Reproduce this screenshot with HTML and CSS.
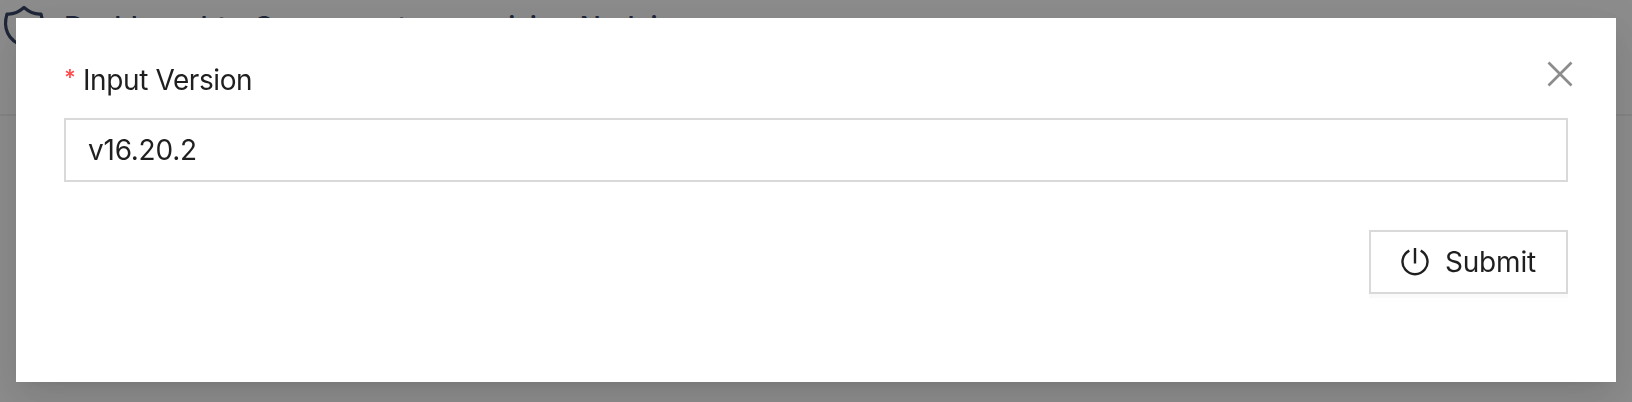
FILE: index.html
```
<!DOCTYPE html>
<html lang="en">
<head>
<meta charset="utf-8">
<title>Input Version</title>
<link rel="stylesheet" href="styles.css">
</head>
<body>
<header class="page-header">
  <svg class="shield" viewBox="0 0 40 42" fill="none" stroke="#364566" stroke-width="3.2" stroke-linejoin="round"><path d="M20 2.500C16 6 9 9.500 3 9C-1 22 3 36 20 41C37 36 41 22 37 9C31 9.500 24 6 20 2.500Z"/></svg>
  <h1 class="page-title">Dashboard to Component supervision Nodejs</h1>
</header>
<div class="mask">
  <section class="modal" role="dialog">
    <button class="close" aria-label="Close"><svg viewBox="0 0 26 26" stroke="currentColor" stroke-width="2.7" fill="none"><path d="M1.500 1.500 24.500 24.500M24.500 1.500 1.500 24.500"/></svg></button>
    <form class="form">
      <label class="label" for="version"><span class="required">*</span>Input Version</label>
      <input class="input" id="version" value="v16.20.2">
      <button class="submit" type="button"><svg viewBox="0 0 28 28" stroke="currentColor" stroke-width="2.400" fill="none"><path d="M14 0V15.500M8.300 2.600A12.500 12.500 0 1 0 19.700 2.600"/></svg><span>Submit</span></button>
    </form>
  </section>
</div>
</body>
</html>
```
FILE: styles.css
```
* { box-sizing: border-box; }
body {
  margin: 0;
  height: 402px;
  overflow: hidden;
  background: #fff;
  color: #1f1f1f;
  font-family: Inter, sans-serif;
  font-size: 28px;
}
.page-header {
  display: flex;
  align-items: flex-start;
  gap: 20px;
  height: 116px;
  padding: 5px 4px 0;
  border-bottom: 2px solid #f0f0f0;
}
.shield { width: 40px; height: 42px; overflow: visible; }
.page-title {
  margin: 5px 0 0;
  color: #364566;
  font-size: 28px;
  font-weight: 500;
  line-height: 34px;
  letter-spacing: -0.3px;
  word-spacing: 3px;
}
.mask {
  position: fixed;
  inset: 0;
  padding: 18px 16px 20px;
  background: rgba(0, 0, 0, 0.45);
}
.modal {
  position: relative;
  height: 364px;
  padding: 40px 48px;
  background: #fff;
  box-shadow: 0 6px 12px -8px rgba(0, 0, 0, 0.12), 0 12px 32px rgba(0, 0, 0, 0.08), 0 18px 56px 16px rgba(0, 0, 0, 0.05);
}
.close {
  position: absolute;
  top: 43px;
  right: 43px;
  width: 26px;
  height: 26px;
  padding: 0;
  border: 0;
  background: none;
  color: #8c8c8c;
}
.close svg { display: block; }
.form { display: flex; flex-direction: column; }
.label {
  display: flex;
  height: 44px;
  margin-bottom: 16px;
  line-height: 44px;
  letter-spacing: -0.4px;
}
.required {
  width: 19px;
  color: #ff4d4f;
  font-size: 22px;
  font-weight: 600;
  line-height: 39px;
}
.input {
  height: 64px;
  padding: 0 22px;
  border: 2px solid #d9d9d9;
  border-radius: 0;
  color: inherit;
  font: inherit;
  letter-spacing: -0.25px;
}
.submit {
  display: flex;
  align-items: center;
  align-self: flex-end;
  gap: 16px;
  width: 199px;
  height: 64px;
  margin-top: 48px;
  padding: 0 30px;
  border: 2px solid #d9d9d9;
  background: #fff;
  box-shadow: 0 4px 0 rgba(0, 0, 0, 0.02);
  color: inherit;
  font: inherit;
  letter-spacing: -0.2px;
}
.submit svg { width: 28px; height: 28px; flex: none; }
```
